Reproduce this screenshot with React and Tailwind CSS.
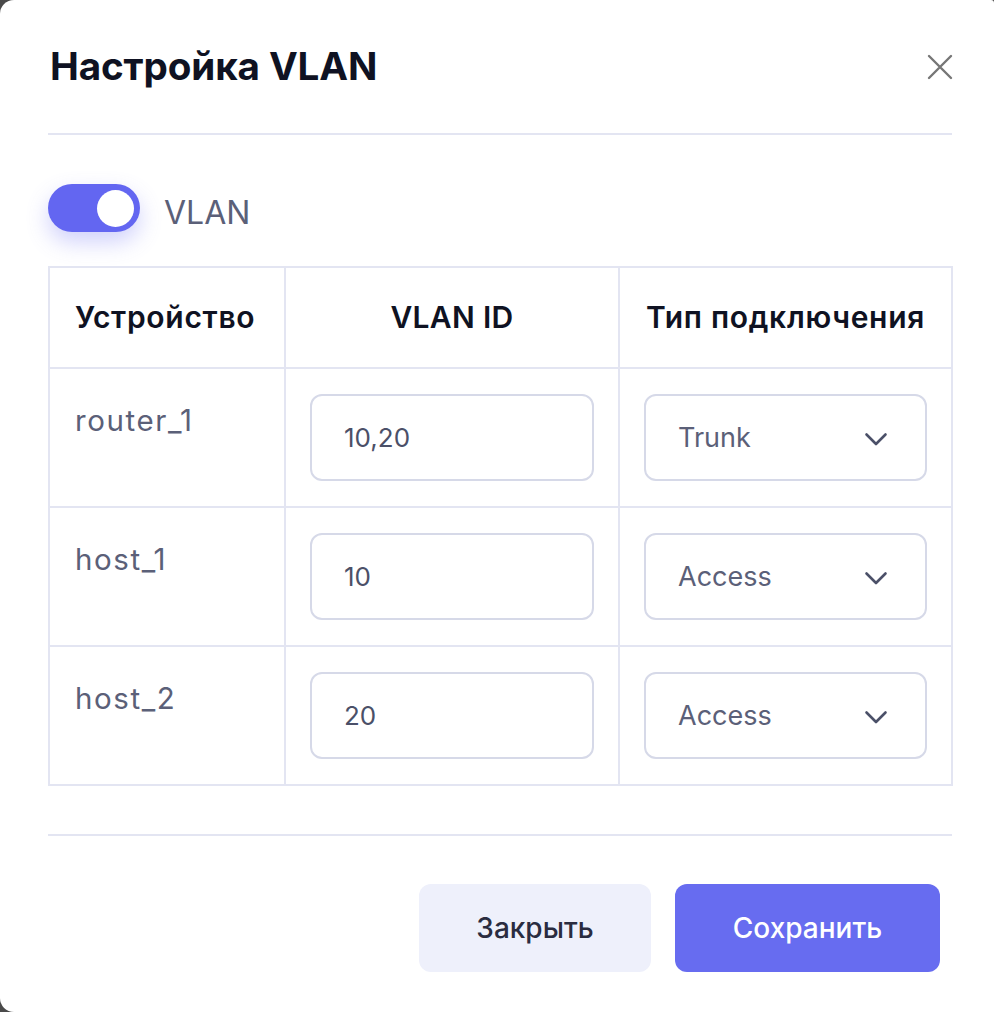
import React, { useState } from 'react'

const rows = [
  { device: 'router_1', vlan: '10,20', type: 'Trunk' },
  { device: 'host_1', vlan: '10', type: 'Access' },
  { device: 'host_2', vlan: '20', type: 'Access' },
]

function Chevron() {
  return (
    <svg width="24" height="14" viewBox="0 0 24 14" fill="none" stroke="#4b5068" strokeWidth="2.6" strokeLinecap="round" strokeLinejoin="round">
      <path d="M2.5 2.5l9.5 9.5 9.5-9.5" />
    </svg>
  )
}

export default function App() {
  const [on, setOn] = useState(true)

  return (
    <div className="bg-[#4a4a4a] w-[994px] h-[1012px]" style={{ fontFamily: 'Inter, "Noto Sans", sans-serif' }}>
      <div className="bg-white w-full h-full rounded-tl-[14px] rounded-bl-[14px] rounded-tr-[3px] pl-[48px] pr-[42px] pt-[40px]">
        <div className="flex items-center justify-between h-[54px]">
          <h1 className="text-[38.6px] font-bold text-[#0f1222] tracking-[-0.1px] ml-[2px]">Настройка VLAN</h1>
          <button className="w-[30px] h-[30px] flex items-center justify-center mr-[-3px]">
            <svg width="26" height="26" viewBox="0 0 26 26" stroke="#767676" strokeWidth="2.4" strokeLinecap="round">
              <path d="M2 2l22 22M24 2L2 24" />
            </svg>
          </button>
        </div>

        <div className="h-[2px] bg-[#e3e5f2] mt-[39px]" />

        <div className="flex items-center gap-[24px] mt-[48px] h-[50px]">
          <button
            onClick={() => setOn(!on)}
            className="w-[92px] h-[48px] rounded-full bg-[#6366f1] flex items-center justify-end px-[6px] shadow-[0_10px_22px_rgba(99,102,241,0.3)]"
          >
            <span className="w-[37px] h-[37px] rounded-full bg-white" />
          </button>
          <span className="text-[32px] text-[#5b6078] pt-[10px]">VLAN</span>
        </div>

        <table className="mt-[33px] w-[903px] border-collapse border-2 border-[#e3e5f2] table-fixed">
          <colgroup>
            <col className="w-[236px]" />
            <col className="w-[334px]" />
            <col className="w-[333px]" />
          </colgroup>
          <thead>
            <tr className="h-[101px]">
              <th className="border-2 border-[#e3e5f2] text-left pl-[25px] text-[30px] font-semibold tracking-[0.7px] text-[#0f1222]">Устройство</th>
              <th className="border-2 border-[#e3e5f2] text-center text-[30px] font-semibold tracking-[0.3px] text-[#0f1222]">VLAN ID</th>
              <th className="border-2 border-[#e3e5f2] text-center text-[30px] font-semibold tracking-[0.7px] text-[#0f1222] whitespace-nowrap">Тип подключения</th>
            </tr>
          </thead>
          <tbody>
            {rows.map((r) => (
              <tr key={r.device} className="h-[139px]">
                <td className="border-2 border-[#e3e5f2] align-top pl-[25px] pt-[29px] text-[29.5px] tracking-[1.6px] text-[#5b6078]">{r.device}</td>
                <td className="border-2 border-[#e3e5f2] px-[24px]">
                  <div className="h-[87px] rounded-[12px] border-2 border-[#d6d9e8] flex items-center pl-[32px] text-[26px] text-[#4b5068]">
                    {r.vlan}
                  </div>
                </td>
                <td className="border-2 border-[#e3e5f2] px-[24px]">
                  <div className="h-[87px] rounded-[12px] border-2 border-[#d6d9e8] flex items-center justify-between pl-[32px] pr-[37px] pt-[2px] text-[27px] text-[#5b6078]">
                    <span>{r.type}</span>
                    <Chevron />
                  </div>
                </td>
              </tr>
            ))}
          </tbody>
        </table>

        <div className="h-[2px] bg-[#e3e5f2] mt-[48px]" />

        <div className="flex justify-end gap-[24px] mt-[48px] mr-[12px]">
          <button className="w-[232px] h-[88px] rounded-[12px] bg-[#eef0fb] text-[28px] font-medium text-[#2a2c40]">Закрыть</button>
          <button className="w-[265px] h-[88px] rounded-[12px] bg-[#676cf0] text-[28px] font-medium text-white">Сохранить</button>
        </div>
      </div>
    </div>
  )
}
